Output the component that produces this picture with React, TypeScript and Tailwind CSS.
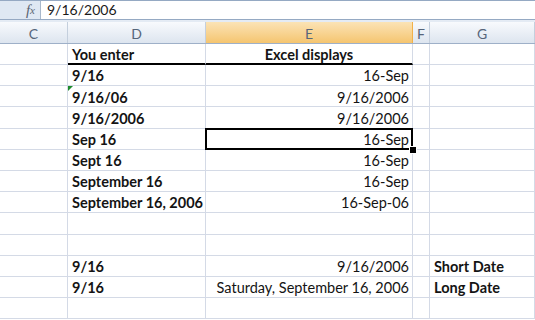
import type { ReactNode } from 'react'

const cols = [
  { key: 'C', w: 'w-[68px]' },
  { key: 'D', w: 'w-[138px]' },
  { key: 'E', w: 'w-[207px]' },
  { key: 'F', w: 'w-[17px]' },
  { key: 'G', w: 'w-[105px]' },
]

type Row = { d?: string; e?: string; g?: string; selected?: boolean; flag?: boolean }

const rows: Row[] = [
  { d: '9/16', e: '16-Sep' },
  { d: '9/16/06', e: '9/16/2006', flag: true },
  { d: '9/16/2006', e: '9/16/2006' },
  { d: 'Sep 16', e: '16-Sep', selected: true },
  { d: 'Sept 16', e: '16-Sep' },
  { d: 'September 16', e: '16-Sep' },
  { d: 'September 16, 2006', e: '16-Sep-06' },
  {},
  {},
  { d: '9/16', e: '9/16/2006', g: 'Short Date' },
  { d: '9/16', e: 'Saturday, September 16, 2006', g: 'Long Date' },
  {},
]

function Cell({ w, children, className = '' }: { w: string; children?: ReactNode; className?: string }) {
  return (
    <div
      className={`${w} relative flex h-full shrink-0 items-center whitespace-nowrap border-r border-b border-[#d4dae6] pt-[3px] leading-none ${className}`}
    >
      {children}
    </div>
  )
}

export default function App() {
  return (
    <div className="h-[320px] w-[535px] overflow-hidden bg-white font-['Lato',sans-serif] text-[14.5px] text-[#141414]">
      {/* formula bar */}
      <div className="flex h-[20px] border-t border-b border-[#95a9c3] bg-[#dfe8f3]">
        <div className="flex w-[40px] items-center justify-end pr-[5px] font-['Liberation_Serif',serif] text-[15px] italic text-[#5a6472]">
          f<span className="text-[11px]">x</span>
        </div>
        <div className="flex flex-1 items-center border-l border-[#a8b8cc] bg-white pl-[6px] text-[14px] leading-none text-[#1a1a1a]">
          9/16/2006
        </div>
      </div>
      <div className="h-[2px] bg-[#e4ebf4]" />

      {/* column headers */}
      <div className="flex h-[22px] border-b border-[#9eb0c8] text-[14px] text-[#56657a]">
        {cols.map((c) => (
          <div
            key={c.key}
            className={`${c.w} flex shrink-0 items-center justify-center border-r pt-[1px] ${
              c.key === 'E'
                ? 'border-[#f2b14a] bg-gradient-to-b from-[#fbe3b5] to-[#f5c56f]'
                : 'border-[#c4cfdd] bg-gradient-to-b from-[#f8fafd] to-[#dde5ef]'
            }`}
          >
            {c.key}
          </div>
        ))}
      </div>

      {/* title row */}
      <div className="flex h-[21px]">
        <Cell w="w-[68px]" />
        <Cell w="w-[138px]" className="border-b-2 border-b-black pl-[4px] text-[14.5px] font-bold">
          You enter
        </Cell>
        <Cell w="w-[207px]" className="justify-center border-b-2 border-b-black text-[14.5px] font-bold">
          Excel displays
        </Cell>
        <Cell w="w-[17px]" />
        <Cell w="w-[105px]" />
      </div>

      {rows.map((r, i) => (
        <div key={i} className="flex h-[21.2px]">
          <Cell w="w-[68px]" />
          <Cell w="w-[138px]" className="pl-[4px] text-[14.5px] font-bold">
            {r.flag && (
              <span className="absolute left-0 top-0 h-0 w-0 border-t-[5px] border-r-[5px] border-t-[#1e8c2e] border-r-transparent" />
            )}
            {r.d}
          </Cell>
          <Cell w="w-[207px]" className={`justify-end pr-[3px] ${r.selected ? 'z-10' : ''}`}>
            {r.e}
            {r.selected && (
              <>
                <span className="absolute -left-px -top-px -bottom-px -right-px border-2 border-black" />
                <span className="absolute -right-[4px] -bottom-[4px] h-[6px] w-[6px] bg-black outline outline-1 outline-white" />
              </>
            )}
          </Cell>
          <Cell w="w-[17px]" />
          <Cell w="w-[105px]" className="pl-[4px] text-[14.5px] font-bold">
            {r.g}
          </Cell>
        </div>
      ))}
    </div>
  )
}
